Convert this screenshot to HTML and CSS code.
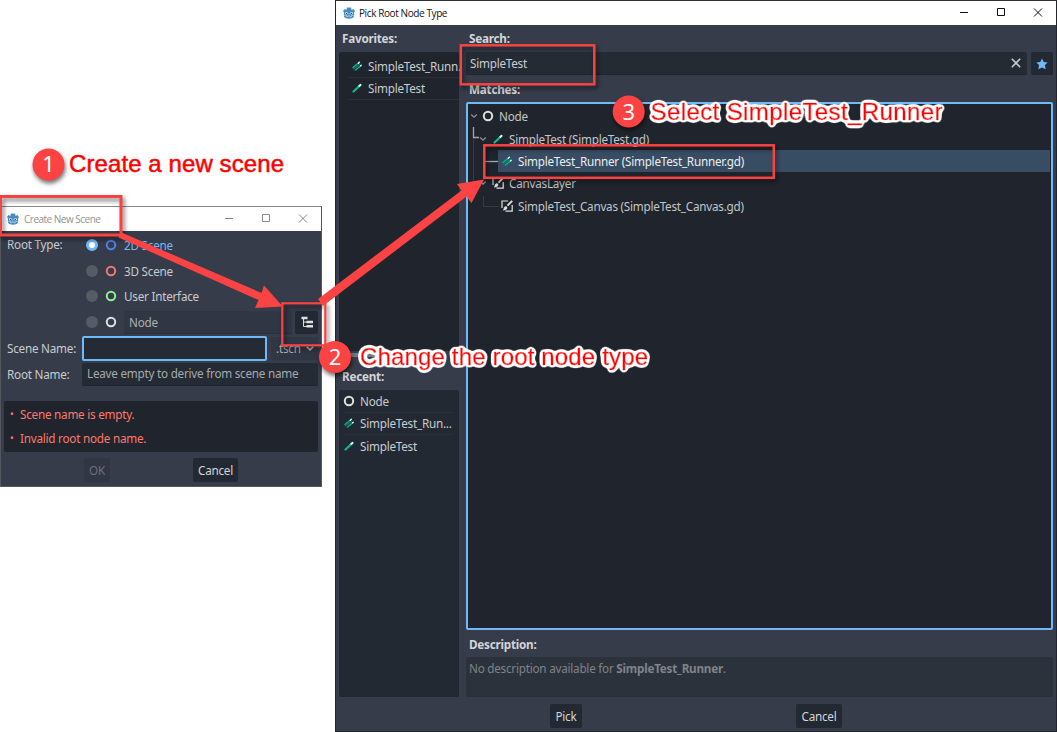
FILE: index.html
```
<!DOCTYPE html>
<html lang="en">
<head>
<meta charset="utf-8">
<title>Pick Root Node Type</title>
<link rel="stylesheet" href="styles.css">
</head>
<body>
<svg class="defs" aria-hidden="true">
  <filter id="outline" x="-5%" y="-30%" width="110%" height="170%">
    <feGaussianBlur in="SourceAlpha" stdDeviation="2.200"/>
    <feComponentTransfer result="fat"><feFuncA type="linear" slope="14" intercept="-.6"/></feComponentTransfer>
    <feFlood flood-color="#fff"/><feComposite in2="fat" operator="in"/>
    <feComposite in="SourceGraphic" operator="over"/>
  </filter>
  <symbol id="godot" viewBox="0 0 12 12">
    <path d="M0 4 1.600 2l1.300.8.9-.3L3.700.8 5.300.2l.7 1 .7-1 1.600.6-.1 1.700.9.300L10.400 2 12 4l-.9 1.200V9c0 3.700-10.200 3.700-10.200 0V5.200z" fill="#478cbf"/>
    <circle cx="3.400" cy="6.300" r="1.300" fill="#dceaf5"/><circle cx="8.600" cy="6.300" r="1.300" fill="#dceaf5"/>
    <circle cx="3.600" cy="6.400" r=".7" fill="#34495e"/><circle cx="8.400" cy="6.400" r=".7" fill="#34495e"/>
    <path d="M6 6v1.500M1.200 8.600h2.300v1.100h1.600v-.9h1.800v.9h1.600V8.600h2.300" stroke="#dceaf5" stroke-width=".6" fill="none"/>
  </symbol>
  <symbol id="ring" viewBox="0 0 12 12"><circle cx="6" cy="6" r="4.200" fill="none" stroke="currentColor" stroke-width="2"/></symbol>
  <symbol id="test" viewBox="0 0 12 12">
    <path d="M2.500 9.500 9.500 3" stroke="#14b58f" stroke-width="2.300" stroke-linecap="round"/>
    <path d="M8.200 4 9.500 2.800" stroke="#d8fff8" stroke-width="1.800" stroke-linecap="round"/>
  </symbol>
  <symbol id="runner" viewBox="0 0 12 12">
    <path d="M2 7.600 8 2.500M4.500 10 9.900 5.600" stroke="#16a888" stroke-width="1.600" stroke-linecap="round"/>
    <path d="M2.300 9.200 9.300 3.600" stroke="#0b7567" stroke-width="1.300"/>
    <path d="M7.300 3.200 8.300 2.300M9.500 5.900l.7-.6" stroke="#d8fff8" stroke-width="1.300" stroke-linecap="round"/>
  </symbol>
  <symbol id="canvas" viewBox="0 0 12 12">
    <path d="M7 1H1V8M11.200 5v6.200H4.500" stroke="#e0e0e0" stroke-width="1.200" fill="none"/>
    <path d="M11.200.9 6.500 5.700" stroke="#e0e0e0" stroke-width="1.900"/>
    <path d="M5.300 6.200c2 1.500 1 3.900-3.400 4.200 1.200-1.500.4-4.200 3.400-4.200z" fill="#e0e0e0"/>
  </symbol>
  <symbol id="chev" viewBox="0 0 8 6"><path d="M1.200 1.500 4 4.200 6.800 1.500" fill="none" stroke="currentColor" stroke-width="1.300"/></symbol>
  <symbol id="min" viewBox="0 0 12 12"><path d="M2 5.500h8" stroke="currentColor"/></symbol>
  <symbol id="max" viewBox="0 0 12 12"><path d="M2.500 1.500h7v7h-7z" stroke="currentColor" fill="none"/></symbol>
  <symbol id="close" viewBox="0 0 12 12"><path d="M2 1.500l8 8M10 1.500l-8 8" stroke="currentColor"/></symbol>
</svg>

<section class="window create">
  <header class="titlebar">
    <svg class="app"><use href="#godot"/></svg><span class="title">Create New Scene</span>
    <span class="controls"><svg><use href="#min"/></svg><svg><use href="#max"/></svg><svg><use href="#close"/></svg></span>
  </header>
  <div class="form">
    <div class="field type">
      <label>Root Type:</label>
      <div class="options">
        <div class="option on"><i class="radio"></i><svg class="ic blue"><use href="#ring"/></svg><span>2D Scene</span></div>
        <div class="option"><i class="radio"></i><svg class="ic red"><use href="#ring"/></svg><span>3D Scene</span></div>
        <div class="option"><i class="radio"></i><svg class="ic green"><use href="#ring"/></svg><span>User Interface</span></div>
        <div class="option"><i class="radio"></i><svg class="ic"><use href="#ring"/></svg><div class="nodebox">Node</div>
          <button class="tree-btn"><svg viewBox="0 0 12 12"><path d="M2.500 2v8.500H6M2.500 6H6" stroke="#e0e0e0" fill="none"/><path d="M.5 2H6.500M5.500 6H12M5.500 10.300H12" stroke="#e0e0e0" stroke-width="2.400"/></svg></button></div>
      </div>
    </div>
    <div class="field"><label>Scene Name:</label><div class="input focus"></div><div class="ext">.tscn<svg><use href="#chev"/></svg></div></div>
    <div class="field"><label>Root Name:</label><div class="input hint">Leave empty to derive from scene name</div></div>
  </div>
  <ul class="errors"><li>Scene name is empty.</li><li>Invalid root node name.</li></ul>
  <footer class="create-foot"><button disabled>OK</button><button>Cancel</button></footer>
</section>

<section class="window pick">
  <header class="titlebar">
    <svg class="app"><use href="#godot"/></svg><span class="title">Pick Root Node Type</span>
    <span class="controls"><svg><use href="#min"/></svg><svg><use href="#max"/></svg><svg><use href="#close"/></svg></span>
  </header>
  <main class="columns">
    <aside class="side">
      <h2>Favorites:</h2>
      <div class="list favs">
        <div class="item"><svg class="ic"><use href="#runner"/></svg>SimpleTest_Runn.</div>
        <div class="item"><svg class="ic"><use href="#test"/></svg>SimpleTest</div>
      </div>
      <div class="grip"><i></i></div>
      <h2 class="recent-title">Recent:</h2>
      <div class="list recent">
        <div class="item"><svg class="ic"><use href="#ring"/></svg>Node</div>
        <div class="item"><svg class="ic"><use href="#runner"/></svg>SimpleTest_Run...</div>
        <div class="item"><svg class="ic"><use href="#test"/></svg>SimpleTest</div>
      </div>
    </aside>
    <div class="content">
      <h2>Search:</h2>
      <div class="search"><div class="query">SimpleTest<svg viewBox="0 0 12 12"><path d="M1.800 1.800l8.400 8.400M10.200 1.800l-8.400 8.400" stroke="#c8cacd" stroke-width="1.600"/></svg></div>
        <button class="fav"><svg viewBox="0 0 12 12"><path d="M6 .4 7.700 3.900l4 .5-2.800 2.700.8 4.200L6 9.500l-3.700 1.800.8-4.200L.3 4.400l4-.5z" fill="#70bafa"/></svg></button></div>
      <h2 class="matches">Matches:</h2>
      <div class="tree">
        <svg class="lines" viewBox="0 0 60 112"><path d="M5.500 23V33.500H11" stroke="#a4a8ac" stroke-width="1.300"/><path d="M5.500 35V78.500H12M15.500 92v10.500H31" stroke="#363b42"/><path d="M16 57.500H30" stroke="#a4a8ac" stroke-width="1.300"/></svg>
        <div class="row l0"><svg class="arrow"><use href="#chev"/></svg><svg class="ic"><use href="#ring"/></svg>Node</div>
        <div class="row l1"><svg class="arrow"><use href="#chev"/></svg><svg class="ic"><use href="#test"/></svg>SimpleTest (SimpleTest.gd)</div>
        <div class="row l2 selected"><svg class="ic"><use href="#runner"/></svg>SimpleTest_Runner (SimpleTest_Runner.gd)</div>
        <div class="row l1"><svg class="arrow"><use href="#chev"/></svg><svg class="ic"><use href="#canvas"/></svg>CanvasLayer</div>
        <div class="row l2"><svg class="ic"><use href="#canvas"/></svg>SimpleTest_Canvas (SimpleTest_Canvas.gd)</div>
      </div>
      <h2 class="desc-title">Description:</h2>
      <div class="desc">No description available for <b>SimpleTest_Runner</b>.</div>
    </div>
  </main>
  <footer class="pick-foot"><button>Pick</button><button>Cancel</button></footer>
</section>

<svg class="notes" viewBox="0 0 1057 732">
  <g class="marks">
    <rect x=".5" y="196.500" width="120.500" height="38.500" stroke-width="3"/>
    <rect x="282.300" y="303.300" width="43" height="42" stroke-width="2.200"/>
    <rect x="460.800" y="45.300" width="133.500" height="39" stroke-width="2.500"/>
    <rect x="484.300" y="145.300" width="289.500" height="32.500" stroke-width="2.500"/>
  </g>
  <g class="arrows">
    <path d="M118.500 237.500 121.500 232.500 261.500 293 264 285.500 282.800 306.500 255 308 258.500 300z"/>
    <path d="M323 306 318 299 461.500 190.500 457 184 484 179.500 471.500 203 466.500 196.500z"/>
  </g>
  <g class="badges"><circle cx="48.500" cy="164.500" r="16"/><circle cx="335" cy="357" r="16"/><circle cx="628.700" cy="111.500" r="16"/></g>
  <g class="nums"><text x="48.500" y="172">1</text><text x="335" y="365">2</text><text x="628.700" y="119.500">3</text></g>
  <g class="captions">
    <text x="69" y="172" textLength="215">Create a new scene</text>
    <text class="halo" x="360" y="365" textLength="288">Change the root node type</text>
    <text class="halo" x="650.500" y="119.500" textLength="292">Select SimpleTest_Runner</text>
  </g>
</svg>
</body>
</html>
```
FILE: styles.css
```
* { box-sizing: border-box; }
body { margin: 0; width: 1057px; height: 732px; position: relative; overflow: hidden; background: #fff; font: 11.700px/16px "Noto Sans", sans-serif; letter-spacing: -.23px; color: #c9cbcf; }
svg { display: block; flex: none; overflow: visible; }
.defs { position: absolute; width: 0; height: 0; }
h2 { margin: 0; font-size: 11.700px; line-height: 16px; font-weight: 700; padding-left: 3px; color: #d3d5d8; }
button { font: inherit; letter-spacing: inherit; color: #d3d5d8; background: #232932; border: 0; border-radius: 2px; padding: 0; height: 24px; }

.window { position: absolute; background: #363c4a; display: flex; flex-direction: column; }
.create { left: 0; top: 206px; width: 322px; height: 281px; border: 1px solid #55585d; border-top-color: #888; }
.pick { left: 335px; top: 0; width: 722px; height: 732px; border: 1px solid #22262c; border-top-color: #333; }

.titlebar { height: 24px; flex: none; background: #fff; display: flex; align-items: center; padding: 0 12px 0 7px; font: 10px/14px "Open Sans", sans-serif; letter-spacing: -.4px; color: #111; }
.create .titlebar { color: #929292; padding: 0 12px 0 6px; }
.app { width: 12px; height: 12px; margin-right: 4px; }
.create .app { margin-right: 5px; }
.create .title { letter-spacing: -.5px; }
.controls { margin-left: auto; display: flex; gap: 25px; color: #111; }
.controls svg { width: 12px; height: 12px; }
.create .controls { color: #888; }

.ic { width: 12px; height: 12px; color: #e0e0e0; margin-right: 5px; }
.blue { color: #4b83f0; } .red { color: #f07a7a; } .green { color: #8eef97; }

.form { padding: 2px 3px 0 6px; display: flex; flex-direction: column; gap: 2px; }
.field { display: flex; height: 24px; align-items: center; }
.field label { width: 75px; flex: none; }
.type { height: auto; align-items: flex-start; }
.type label { padding-top: 3px; width: 79px; }
.options { flex: 1; display: flex; flex-direction: column; gap: 2px; }
.option { height: 23.800px; display: flex; align-items: center; }
.option .ic { margin-right: 7px; }
.radio { width: 12px; height: 12px; border-radius: 50%; background: #555c65; margin-right: 7px; }
.on .radio { background: #fff; border: 3px solid #70bafa; }
.on span { color: #70bafa; }
.nodebox { flex: 1; height: 23px; line-height: 22px; padding-left: 5px; background: #303643; border-bottom: 1px solid #292e39; color: #adb0b5; }
.tree-btn { width: 23px; margin-left: 3px; height: 23px; display: grid; place-items: center; }
.tree-btn svg { width: 12px; height: 12px; }
.input { flex: 1; height: 23px; background: #252b34; border-radius: 2px; line-height: 21px; padding-left: 5px; border-bottom: 1px solid #20252c; }
.focus { border: 2px solid #70bafa; height: 25px; }
.hint { color: #a6a9ae; }
.ext { width: 47px; margin-left: 4px; height: 23px; background: #303643; display: flex; align-items: center; justify-content: space-between; padding: 0 3px 0 5px; color: #adb0b5; }
.ext svg { width: 10px; height: 7px; }
.errors { margin: 15px 3px 0; height: 51px; padding: 1px 6px; background: #20252d; border-radius: 2px; list-style: none; color: #ff786b; line-height: 24px; }
.errors li { display: flex; }
.errors li::before { content: "•"; width: 10px; font-size: 10px; }
.create-foot { display: flex; padding: 6px 0 0 83px; gap: 82px; }
.create-foot button { width: 45px; }
.create-foot button:disabled { width: 26px; margin-right: 1px; color: #6b707b; background: #303643; }

.columns { flex: none; height: 672px; padding: 5px 3px 0 3px; display: flex; gap: 7px; }
.side { width: 120px; display: flex; flex-direction: column; }
.list { background: #232932; border-radius: 2px; white-space: nowrap; }
.side h2, .content h2 { flex: none; }
.favs { margin-top: 6px; height: 299px; padding: 3px 0 0 8px; background: #20252d; }
.item { height: 22.500px; display: flex; align-items: center; border-bottom: 1px solid #2a3039; }
.favs .item { padding-left: 4px; }
.recent .item:last-child { border: 0; }
.recent { flex: 1; margin-top: 6px; padding: 0 6px 0 4px; }
.grip { height: 17px; padding: 2px 0 0 10px; }
.grip i { display: block; width: 28px; height: 4px; background: #73777e; border-radius: 2px; }
.content { flex: 1; display: flex; flex-direction: column; }
.search { margin-top: 6px; display: flex; gap: 4px; height: 23px; }
.query { flex: 1; background: #252b34; border-radius: 2px; border-bottom: 1px solid #20252c; display: flex; justify-content: space-between; align-items: center; padding: 0 5px 0 4px; }
.query svg, .fav svg { width: 12px; height: 12px; }
.fav { width: 22px; height: 23px; display: grid; place-items: center; }
.matches { margin-top: 6px; }
.tree { position: relative; margin-top: 5px; height: 528px; border: 2px solid #70bafa; border-radius: 2px; background: #20252d; padding: 1px 1px 0; color: #c2c5c9; }
.lines { position: absolute; left: 0; top: 0; width: 60px; height: 112px; fill: none; }
.row { height: 22.400px; display: flex; align-items: center; }
.l0 { padding-left: 1px; } .l1 { padding-left: 10px; } .l2 { margin-left: 29px; padding-left: 3px; }
.arrow { width: 8px; height: 6px; margin-right: 4px; color: #8c9096; }
.l1 .arrow { margin-right: 5px; }
.selected { background: #384d63; color: #eceef0; }
.desc-title { margin-top: 6px; }
.desc { margin-top: 5px; height: 40px; padding: 3px; background: #2c323b; color: #7f838a; border-radius: 2px; }
.pick-foot { padding: 7px 0 0 214px; display: flex; gap: 214px; }
.pick-foot button { width: 32px; }
.pick-foot button:last-child { width: 46px; }

.notes { position: absolute; left: 0; top: 0; width: 1057px; height: 732px; pointer-events: none; letter-spacing: 0; }
.marks { fill: none; stroke: #f94242; filter: drop-shadow(2px 3px 2px rgba(0,0,0,.55)); }
.arrows, .badges { fill: #fc4343; }
.badges { filter: drop-shadow(1px 3px 2px rgba(0,0,0,.55)); }
.nums { fill: #fff; font: 22px "Noto Sans", sans-serif; text-anchor: middle; }
.captions { fill: #f00; stroke: #f00; stroke-width: .5px; font: 24px "Liberation Sans", Arial, sans-serif; }
.halo { filter: url(#outline); }
```
